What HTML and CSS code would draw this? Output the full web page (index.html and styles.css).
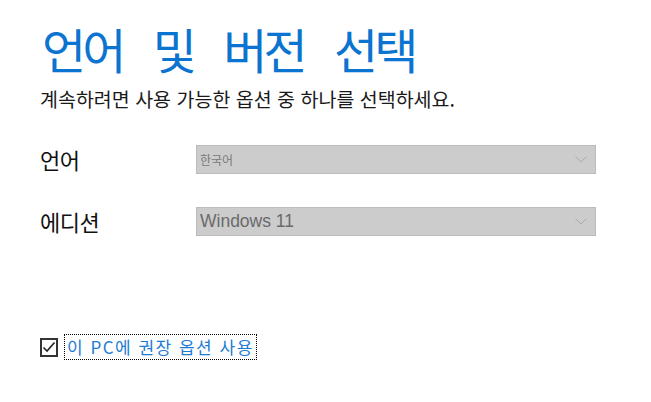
FILE: index.html
```html
<!DOCTYPE html>
<html lang="ko">
<head>
<meta charset="utf-8">
<title>언어 및 버전 선택</title>
<link rel="stylesheet" href="styles.css">
</head>
<body>
<main class="page">
  <h1 class="title">언어 및 버전 선택</h1>
  <p class="subtitle">계속하려면 사용 가능한 옵션 중 하나를 선택하세요.</p>
  <div class="form">
    <div class="row">
      <span class="label">언어</span>
      <div class="select">
        <span class="value value-small">한국어</span>
        <svg class="chevron" width="12" height="7" viewBox="0 0 12 7"><path d="M0.5 0.5 L6 6 L11.5 0.5" fill="none" stroke="#a8a8a8" stroke-width="1"/></svg>
      </div>
    </div>
    <div class="row">
      <span class="label">에디션</span>
      <div class="select">
        <span class="value value-large">Windows 11</span>
        <svg class="chevron" width="12" height="7" viewBox="0 0 12 7"><path d="M0.5 0.5 L6 6 L11.5 0.5" fill="none" stroke="#a8a8a8" stroke-width="1"/></svg>
      </div>
    </div>
  </div>
  <label class="check">
    <span class="box">
      <svg width="14" height="12" viewBox="0 0 14 12"><path d="M1.5 6.5 L5 10 L12.5 1.5" fill="none" stroke="#222" stroke-width="1.6"/></svg>
    </span>
    <span class="check-text">이 PC에 권장 옵션 사용</span>
  </label>
</main>
</body>
</html>
```

FILE: styles.css
```css
html, body {
  margin: 0;
  padding: 0;
  background: #ffffff;
}

body {
  width: 651px;
  height: 402px;
  overflow: hidden;
  font-family: "Noto Sans CJK KR", "Noto Sans", sans-serif;
}

.page {
  padding: 0 0 0 40px;
  display: flex;
  flex-direction: column;
}

.title {
  margin: 18px 0 0 2px;
  font-size: 48px;
  font-weight: 400;
  line-height: 60px;
  color: #0b74d0;
  letter-spacing: -4px;
  word-spacing: 21px;
}

.subtitle {
  margin: 9px 0 0 0;
  font-size: 19.5px;
  line-height: 24px;
  color: #1a1a1a;
}

.form {
  margin-top: 33px;
  display: flex;
  flex-direction: column;
  gap: 32px;
}

.row {
  display: flex;
  align-items: center;
  height: 30px;
}

.label {
  width: 156px;
  font-size: 22px;
  line-height: 30px;
  color: #111111;
  letter-spacing: -0.5px;
}

.select {
  box-sizing: border-box;
  width: 400px;
  height: 29px;
  background: #cccccc;
  border: 1px solid #bcbcbc;
  display: flex;
  align-items: center;
  justify-content: space-between;
  padding: 0 8px 0 3px;
}

.value {
  color: #7a7a7a;
}

.value-small {
  font-size: 12px;
}

.value-large {
  font-family: "Liberation Sans", Arial, sans-serif;
  font-size: 17.5px;
  color: #6a6a6a;
}

.chevron {
  display: block;
}

.check {
  margin-top: 98px;
  display: flex;
  align-items: center;
  gap: 6px;
}

.box {
  box-sizing: border-box;
  width: 18px;
  height: 19px;
  border: 2px solid #333333;
  display: flex;
  align-items: center;
  justify-content: center;
}

.check-text {
  box-sizing: border-box;
  height: 26px;
  padding: 0 2px;
  border: 1px dotted #000000;
  font-size: 17px;
  line-height: 24px;
  color: #1c7cd4;
  letter-spacing: 1.5px;
}
```
